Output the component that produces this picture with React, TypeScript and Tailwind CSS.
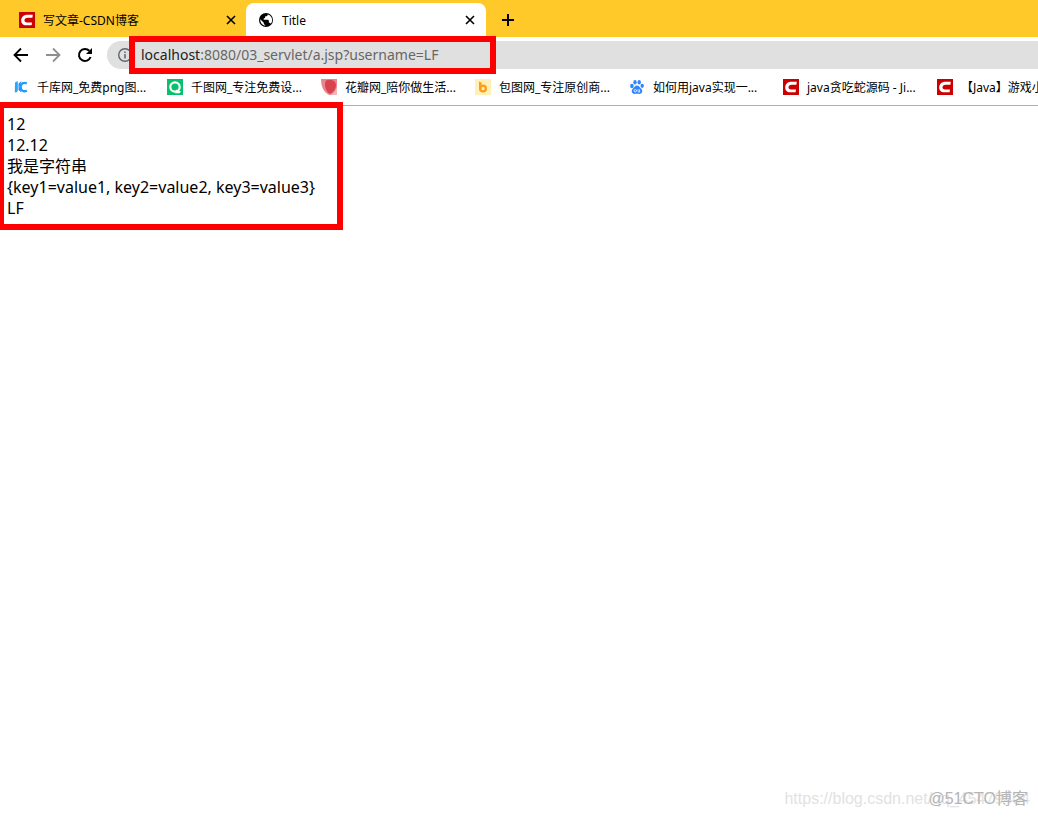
import type { ReactNode } from "react";

interface Bookmark {
	title: string;
	icon: ReactNode;
}

function CsdnIcon() {
	return (
		<svg viewBox="0 0 16 16" className="size-4 shrink-0" aria-hidden="true">
			<rect width="16" height="16" fill="#cc0000" />
			<path
				d="M13.800 2.800 13.400 5.700H8.600C6.600 5.700 5.600 6.800 5.500 8.200c-.1 1.400.8 2.200 2.500 2.200h5l-.4 2.900H7.200C3.800 13.300 2 11.200 2.200 8.300 2.400 5 4.900 2.800 8.300 2.800z"
				fill="#fff"
			/>
		</svg>
	);
}

function QiankuIcon() {
	return (
		<svg viewBox="0 0 16 16" className="size-4 shrink-0" aria-hidden="true">
			<path d="M2 3.500 4.800 2v9c0 1.700-.8 2.500-3 2.500z" fill="#2aa5fa" />
			<path d="M5.500 4.500 8.500 2 6.600 7.500 8.500 13.500 5.500 11z" fill="#2b8cf5" />
			<path
				d="M13.800 4.400C10 2.800 7.600 5 7.600 8s2.600 5.400 6.200 3.600"
				fill="none"
				stroke="#1f9bfb"
				strokeWidth="2.300"
			/>
		</svg>
	);
}

function QiantuIcon() {
	return (
		<svg viewBox="0 0 16 16" className="size-4 shrink-0" aria-hidden="true">
			<rect width="16" height="16" fill="#08bf6b" />
			<circle
				cx="8"
				cy="8"
				r="4.700"
				fill="none"
				stroke="#fff"
				strokeWidth="2.200"
			/>
			<path d="m9.500 10.500 4.500 2-1.500 1.700H8z" fill="#fff" />
		</svg>
	);
}

function HuabanIcon() {
	return (
		<svg viewBox="0 0 16 16" className="size-4 shrink-0" aria-hidden="true">
			<path d="M0 0h16v16H9C4 15 0 9 0 0z" fill="#e9868d" />
			<path d="M9 16c4-1 6-5 7-9v9z" fill="#f3b7ba" />
			<path
				d="M5 1.500C8 0 13 .5 14.500 4c1.500 4-1 8.500-5.500 11C5 13 2.500 6 5 1.500z"
				fill="#d9434e"
			/>
		</svg>
	);
}

function BaotuIcon() {
	return (
		<svg viewBox="0 0 16 16" className="size-4 shrink-0" aria-hidden="true">
			<rect width="16" height="16" fill="#fff0b8" />
			<path d="m4 2.500 2.500 1V10H4z" fill="#ff9c1a" />
			<circle
				cx="8"
				cy="9.500"
				r="2.900"
				fill="none"
				stroke="#ff9c1a"
				strokeWidth="2.300"
			/>
		</svg>
	);
}

function BaiduIcon() {
	return (
		<svg viewBox="0 0 16 16" className="size-4 shrink-0" aria-hidden="true">
			<g fill="#3385ff">
				<ellipse cx="2.900" cy="7" rx="1.800" ry="2.200" />
				<ellipse cx="6" cy="3.300" rx="1.700" ry="2.300" />
				<ellipse cx="10.200" cy="3.300" rx="1.700" ry="2.300" />
				<ellipse cx="13.200" cy="6.800" rx="1.700" ry="2.100" />
				<path d="M8 6.500c1.900 0 2.600 1.900 4 3.100 2.300 2 1.300 5.400-1.500 5.400-1 0-1.600-.2-2.500-.2s-1.500.2-2.500.2c-2.800 0-3.800-3.400-1.500-5.400 1.400-1.200 2.100-3.100 4-3.100z" />
			</g>
			<circle
				cx="6.300"
				cy="11.700"
				r="1.200"
				fill="none"
				stroke="#fff"
				strokeWidth=".8"
			/>
			<path
				d="M9 10.300v2c0 .6.400.8 1.600.8v-2.800"
				fill="none"
				stroke="#fff"
				strokeWidth=".8"
			/>
		</svg>
	);
}

function GlobeIcon() {
	return (
		<svg viewBox="0 0 16 16" className="size-4 shrink-0" aria-hidden="true">
			<circle cx="8" cy="8" r="7" fill="#000" />
			<path
				d="M9.700 2.400c0 1.200-.8 1.900-1.900 1.900-.6 0-.7.500-.7 1.200 0 .6-.7.900-1.400.9v1.400h3.900c.8 0 1.300.6 1.300 1.400v1.600c1 0 1.500.4 1.800 1A5.800 5.800 0 0 0 9.700 2.400zM2.300 7.200l3.500 3.500v.7c0 .8.700 1.300 1.400 1.300v1.100a5.900 5.900 0 0 1-4.900-6.600z"
				fill="#fff"
			/>
		</svg>
	);
}

function CloseIcon() {
	return (
		<svg viewBox="0 0 16 16" className="size-4" aria-hidden="true">
			<path d="m4 4 8 8M12 4l-8 8" stroke="#000" strokeWidth="1.600" />
		</svg>
	);
}

const bookmarks: Bookmark[] = [
	{ title: "千库网_免费png图...", icon: <QiankuIcon /> },
	{ title: "千图网_专注免费设...", icon: <QiantuIcon /> },
	{ title: "花瓣网_陪你做生活...", icon: <HuabanIcon /> },
	{ title: "包图网_专注原创商...", icon: <BaotuIcon /> },
	{ title: "如何用java实现一...", icon: <BaiduIcon /> },
	{ title: "java贪吃蛇源码 - Ji...", icon: <CsdnIcon /> },
	{ title: "【Java】游戏小项目", icon: <CsdnIcon /> },
];

const output = [
	"12",
	"12.12",
	"我是字符串",
	"{key1=value1, key2=value2, key3=value3}",
	"LF",
];

function TabStrip() {
	return (
		<div className="flex h-[37px] items-end bg-[#ffc929] text-xs">
			<div className="flex h-[34px] w-[246px] shrink-0 items-center pr-[7px] pl-[19px]">
				<CsdnIcon />
				<span className="ml-2 flex-1 pt-0.5">写文章-CSDN博客</span>
				<button type="button" aria-label="Close 写文章-CSDN博客">
					<CloseIcon />
				</button>
			</div>
			<div className="flex h-[34px] w-60 shrink-0 items-center rounded-t-lg bg-white pr-2 pl-3">
				<GlobeIcon />
				<span className="ml-2 flex-1 pt-0.5">Title</span>
				<button type="button" aria-label="Close Title">
					<CloseIcon />
				</button>
			</div>
			<button
				type="button"
				aria-label="New tab"
				className="flex h-[34px] w-11 items-center justify-center"
			>
				<svg viewBox="0 0 16 16" className="size-4" aria-hidden="true">
					<path d="M8 2v12M2 8h12" stroke="#000" strokeWidth="2" />
				</svg>
			</button>
		</div>
	);
}

function Toolbar() {
	return (
		<div className="flex h-9 items-center pl-3">
			<div className="flex gap-3.5">
				<button type="button" aria-label="Back">
					<svg viewBox="0 0 18 18" className="size-[18px]" aria-hidden="true">
						<path
							d="M16 9H3M9 2.500 2.500 9 9 15.500"
							fill="none"
							stroke="#000"
							strokeWidth="1.800"
						/>
					</svg>
				</button>
				<button type="button" aria-label="Forward">
					<svg viewBox="0 0 18 18" className="size-[18px]" aria-hidden="true">
						<path
							d="M2 9h13M9 2.500 15.500 9 9 15.500"
							fill="none"
							stroke="#8f8f8f"
							strokeWidth="1.800"
						/>
					</svg>
				</button>
				<button type="button" aria-label="Reload">
					<svg viewBox="0 0 18 18" className="size-[18px]" aria-hidden="true">
						<path
							d="M14.600 11A6 6 0 1 1 13.300 4.800"
							fill="none"
							stroke="#000"
							strokeWidth="2"
						/>
						<path d="M16 2v6h-6z" fill="#000" />
					</svg>
				</button>
			</div>
			<div className="ml-[13px] flex h-7 flex-1 items-center rounded-l-full bg-[#e0e0e0] pl-2.5">
				<svg viewBox="0 0 16 16" className="size-4" aria-hidden="true">
					<circle
						cx="8"
						cy="8"
						r="6.300"
						fill="none"
						stroke="#5f6368"
						strokeWidth="1.400"
					/>
					<path d="M8 7v4.500M8 4.500V6" stroke="#5f6368" strokeWidth="1.500" />
				</svg>
				<div className="relative ml-2 text-sm leading-5 text-[#666]">
					<span className="text-[#222]">localhost</span>
					:8080/03_servlet/a.jsp?username=LF
					<div className="absolute -top-[9px] -left-3 h-[38px] w-[367px] border-6 border-[#f00]" />
				</div>
			</div>
		</div>
	);
}

function BookmarksBar() {
	return (
		<nav className="flex h-[33px] overflow-hidden border-b border-[#b0b0b0] pb-1 pl-[13px] text-xs">
			{bookmarks.map((bookmark) => (
				<a
					key={bookmark.title}
					href="#"
					className="flex w-[154px] shrink-0 items-center gap-2 whitespace-nowrap"
				>
					{bookmark.icon}
					<span className="pt-0.5">{bookmark.title}</span>
				</a>
			))}
		</nav>
	);
}

export default function App() {
	return (
		<div className="flex min-h-screen flex-col overflow-hidden bg-white font-['Noto_Sans','Noto_Sans_CJK_SC',sans-serif] text-black">
			<TabStrip />
			<Toolbar />
			<BookmarksBar />
			<main className="relative flex flex-1 flex-col justify-between">
				<div className="relative w-[343px] px-[7px] pt-2 text-base leading-[21px]">
					{output.map((line) => (
						<p key={line} className="whitespace-nowrap">
							{line}
						</p>
					))}
					<div className="absolute -top-1 -left-0.5 h-32 w-[345px] border-6 border-[#f00]" />
				</div>
				<div className="relative flex justify-end pr-2 pb-2 font-['Liberation_Sans','Noto_Sans_CJK_SC',sans-serif] text-base leading-5">
					<span className="text-[#e2e2e2]">https://blog.csdn.net/qq_45479404</span>
					<span className="absolute right-2.5 text-[#b5b5b5]">@51CTO博客</span>
				</div>
			</main>
		</div>
	);
}
